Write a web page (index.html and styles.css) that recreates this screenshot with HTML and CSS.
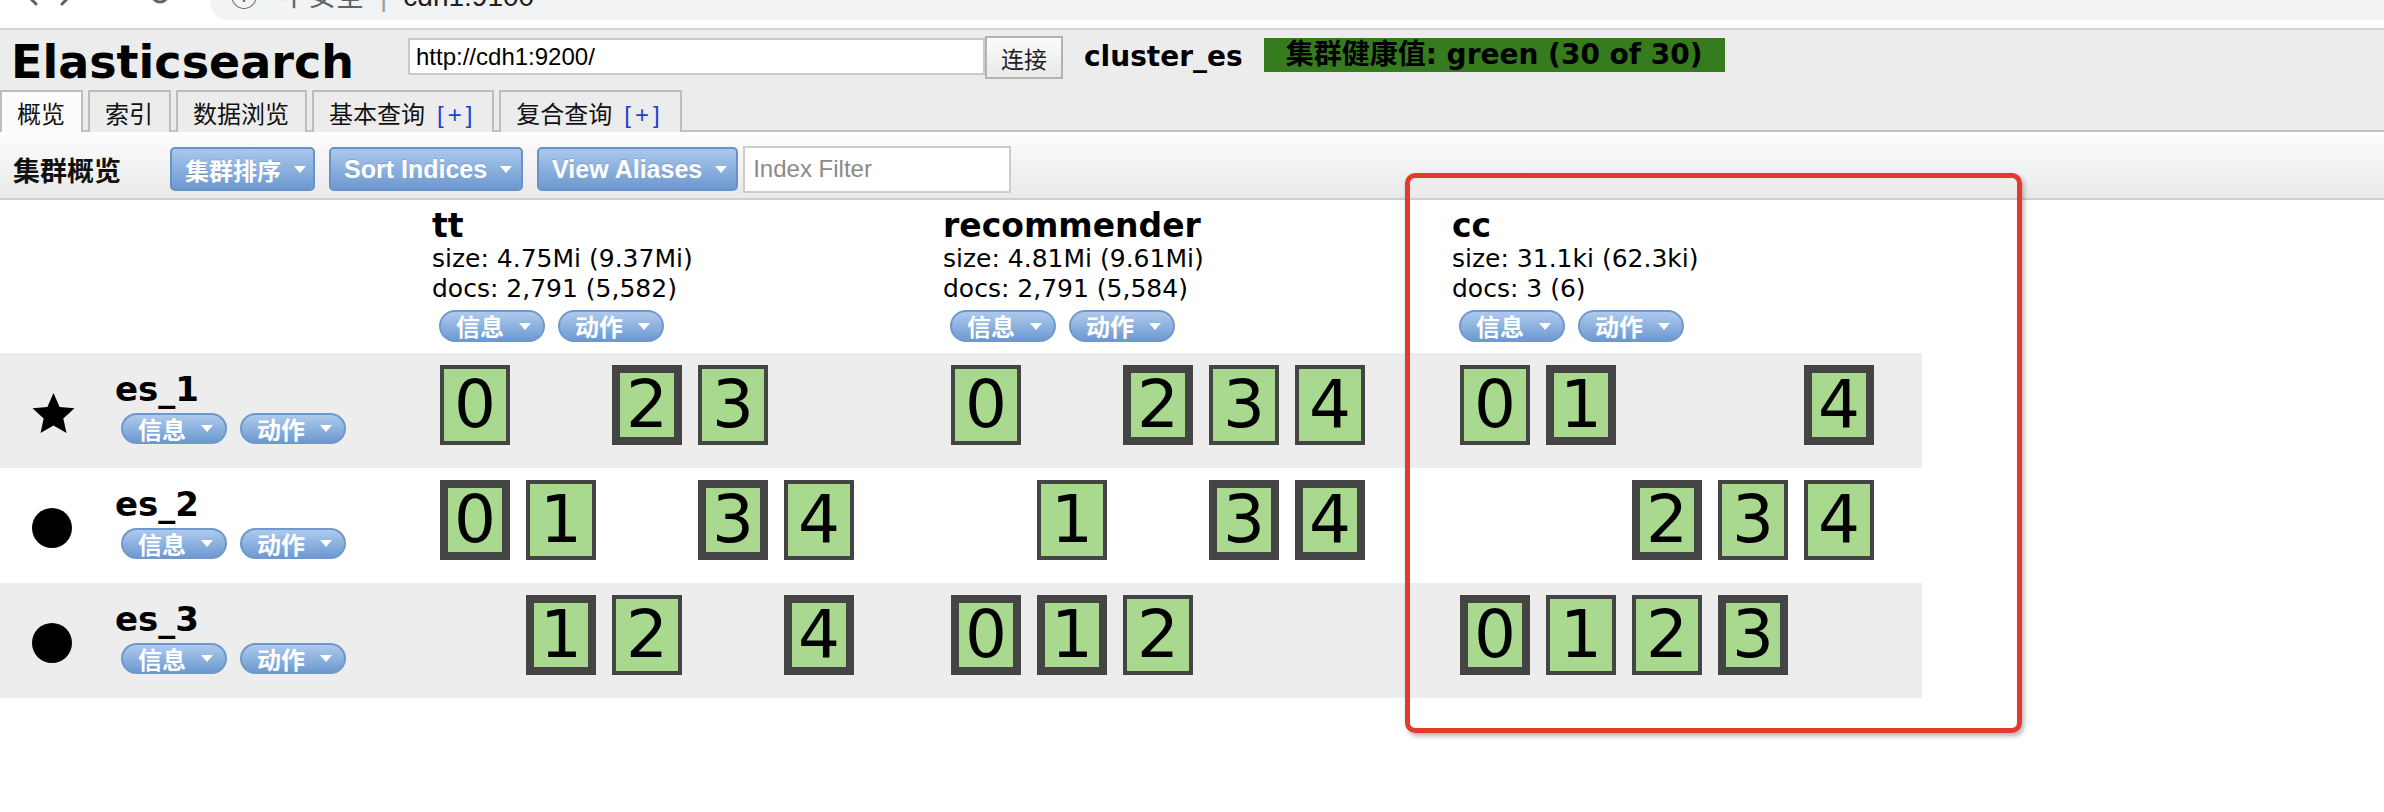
FILE: index.html
```html
<!DOCTYPE html>
<html lang="zh">
<head>
<meta charset="utf-8">
<title>Elasticsearch Head</title>
<link rel="stylesheet" href="styles.css">
</head>
<body>
<div class="chrome">
  <div class="navs">
    <svg class="nav-svg" width="210" height="28" viewBox="0 0 210 28">
      <path d="M24 -8 L36 4" />
      <path d="M74 -8 L62 4" />
      <path d="M152 -6 A8 8 0 0 0 168 -6" />
    </svg>
  </div>
  <div class="omni">
    <div class="omni-text">
      <span class="omni-ic">ⓘ</span><span class="omni-warn">不安全</span><span class="omni-sep">|</span><span class="omni-url">cdh1:9100</span>
    </div>
  </div>
</div>

<div class="header">
  <div class="hrow">
    <h1 class="title">Elasticsearch</h1>
    <input class="url" type="text" value="http://cdh1:9200/">
    <button class="connect">连接</button>
    <span class="cluster-name">cluster_es</span>
    <span class="health">集群健康值: green (30 of 30)</span>
  </div>
  <div class="tabs">
    <div class="tab active">概览</div>
    <div class="tab">索引</div>
    <div class="tab">数据浏览</div>
    <div class="tab">基本查询<span class="plus">[+]</span></div>
    <div class="tab">复合查询<span class="plus">[+]</span></div>
  </div>
</div>

<div class="toolbar">
  <span class="tb-label">集群概览</span>
  <button class="tb-btn cjk">集群排序<i class="tri"></i></button>
  <button class="tb-btn">Sort Indices<i class="tri"></i></button>
  <button class="tb-btn">View Aliases<i class="tri"></i></button>
  <input class="filter" type="text" placeholder="Index Filter">
</div>

<div class="cluster">
  <div class="row head">
    <div class="cell"></div>
    <div class="cell idx">
      <div class="name">tt</div>
      <div class="meta">size: 4.75Mi (9.37Mi)</div>
      <div class="meta">docs: 2,791 (5,582)</div>
      <div class="pills"><span class="pill">信息<i class="tri"></i></span><span class="pill">动作<i class="tri"></i></span></div>
    </div>
    <div class="cell idx">
      <div class="name">recommender</div>
      <div class="meta">size: 4.81Mi (9.61Mi)</div>
      <div class="meta">docs: 2,791 (5,584)</div>
      <div class="pills"><span class="pill">信息<i class="tri"></i></span><span class="pill">动作<i class="tri"></i></span></div>
    </div>
    <div class="cell idx">
      <div class="name">cc</div>
      <div class="meta">size: 31.1ki (62.3ki)</div>
      <div class="meta">docs: 3 (6)</div>
      <div class="pills"><span class="pill">信息<i class="tri"></i></span><span class="pill">动作<i class="tri"></i></span></div>
    </div>
  </div>

  <div class="row node-row alt">
    <div class="cell node">
      <div class="node-ic">
        <svg width="43" height="40" viewBox="0 0 43 40"><polygon points="21.5,0 27.6,13.9 42.5,15.3 31.3,25.4 34.5,40 21.5,32.4 8.5,40 11.7,25.4 0.5,15.3 15.4,13.9"/></svg>
      </div>
      <div class="node-info">
        <div class="name">es_1</div>
        <div class="pills"><span class="pill">信息<i class="tri"></i></span><span class="pill">动作<i class="tri"></i></span></div>
      </div>
    </div>
    <div class="cell shards">
      <div class="shard rep">0</div><div class="shard none"></div><div class="shard pri">2</div><div class="shard rep">3</div>
    </div>
    <div class="cell shards">
      <div class="shard rep">0</div><div class="shard none"></div><div class="shard pri">2</div><div class="shard rep">3</div><div class="shard rep">4</div>
    </div>
    <div class="cell shards">
      <div class="shard rep">0</div><div class="shard pri">1</div><div class="shard none"></div><div class="shard none"></div><div class="shard pri">4</div>
    </div>
  </div>

  <div class="row node-row">
    <div class="cell node">
      <div class="node-ic">
        <svg width="43" height="40" viewBox="0 0 43 40"><circle cx="20" cy="20" r="20"/></svg>
      </div>
      <div class="node-info">
        <div class="name">es_2</div>
        <div class="pills"><span class="pill">信息<i class="tri"></i></span><span class="pill">动作<i class="tri"></i></span></div>
      </div>
    </div>
    <div class="cell shards">
      <div class="shard pri">0</div><div class="shard rep">1</div><div class="shard none"></div><div class="shard pri">3</div><div class="shard rep">4</div>
    </div>
    <div class="cell shards">
      <div class="shard none"></div><div class="shard rep">1</div><div class="shard none"></div><div class="shard pri">3</div><div class="shard pri">4</div>
    </div>
    <div class="cell shards">
      <div class="shard none"></div><div class="shard none"></div><div class="shard pri">2</div><div class="shard rep">3</div><div class="shard rep">4</div>
    </div>
  </div>

  <div class="row node-row alt">
    <div class="cell node">
      <div class="node-ic">
        <svg width="43" height="40" viewBox="0 0 43 40"><circle cx="20" cy="20" r="20"/></svg>
      </div>
      <div class="node-info">
        <div class="name">es_3</div>
        <div class="pills"><span class="pill">信息<i class="tri"></i></span><span class="pill">动作<i class="tri"></i></span></div>
      </div>
    </div>
    <div class="cell shards">
      <div class="shard none"></div><div class="shard pri">1</div><div class="shard rep">2</div><div class="shard none"></div><div class="shard pri">4</div>
    </div>
    <div class="cell shards">
      <div class="shard pri">0</div><div class="shard pri">1</div><div class="shard rep">2</div>
    </div>
    <div class="cell shards">
      <div class="shard pri">0</div><div class="shard rep">1</div><div class="shard rep">2</div><div class="shard pri">3</div>
    </div>
  </div>
</div>

<div class="annotation"></div>
</body>
</html>
```

FILE: styles.css
```css
* { box-sizing: border-box; }
html, body { margin: 0; padding: 0; }
body {
  width: 2384px;
  height: 812px;
  overflow: hidden;
  position: relative;
  background: #ffffff;
  color: #000;
  font-family: "DejaVu Sans", "Noto Sans CJK SC", sans-serif;
}

/* browser chrome strip */
.chrome {
  height: 30px;
  display: flex;
  background: #ffffff;
  border-bottom: 2px solid #d6d6d6;
  overflow: hidden;
}
.navs { width: 210px; flex: 0 0 210px; }
.nav-svg { display: block; overflow: visible; }
.nav-svg path { fill: none; stroke: #5f6368; stroke-width: 3; stroke-linecap: round; }
.omni {
  flex: 1;
  height: 20px;
  background: #f1f3f4;
  border-bottom-left-radius: 18px;
  overflow: hidden;
}
.omni-text {
  margin-top: -17px;
  line-height: 28px;
  font-family: "Liberation Sans", "Noto Sans CJK SC", sans-serif;
  font-size: 28px;
  white-space: nowrap;
  color: #202124;
}
.omni-ic { margin-left: 20px; color: #5f6368; }
.omni-warn { margin-left: 22px; color: #5f6368; }
.omni-sep { margin: 0 16px; color: #9aa0a6; }

/* app header */
.header { background: #ececec; }
.hrow { height: 60px; display: flex; align-items: flex-start; }
.title {
  flex: 0 0 408px;
  margin: 0;
  padding-left: 11px;
  font: bold 46px/60px "DejaVu Sans", sans-serif;
  margin-top: 2px;
}
.url {
  width: 577px;
  height: 37px;
  margin-top: 8px;
  border: 2px solid #c9c9c9;
  background: #fff;
  padding: 0 6px;
  font: 24px "Liberation Sans", sans-serif;
  color: #000;
}
.connect {
  width: 78px;
  height: 43px;
  margin-top: 6px;
  border: 2px solid #b3b3b3;
  background: linear-gradient(#fbfbfb, #e9e9e9);
  font: 23px "Noto Sans CJK SC", sans-serif;
  color: #222;
  padding: 0;
}
.cluster-name {
  margin: 10px 0 0 21px;
  font: bold 28px/34px "DejaVu Sans", sans-serif;
}
.health {
  margin: 8px 0 0 21px;
  height: 34px;
  padding: 0 22px;
  background: #377b1f;
  font: bold 28px/34px "DejaVu Sans", "Noto Sans CJK SC", sans-serif;
  color: #000;
  white-space: nowrap;
}

.tabs {
  display: flex;
  height: 42px;
  border-bottom: 2px solid #c2c2c2;
}
.tab {
  height: 42px;
  margin-right: 5px;
  padding: 7px 16px 0 15px;
  border: 2px solid #bdbdbd;
  border-bottom: none;
  background: #ececec;
  font: 24px/32px "Liberation Sans", "Noto Sans CJK SC", sans-serif;
  color: #111;
  overflow: hidden;
  white-space: nowrap;
}
.tab.active {
  background: #fbfbfb;
  height: 42px;
  margin-bottom: -2px;
  position: relative;
}
.plus {
  margin-left: 12px;
  letter-spacing: 4px;
  color: #1f3fd0;
}

/* toolbar */
.toolbar {
  height: 68px;
  display: flex;
  align-items: center;
  padding: 8px 0 0 13px;
  background: linear-gradient(#fdfdfd, #e9e9e9);
  border-bottom: 2px solid #cfcfcf;
}
.tb-label {
  width: 157px;
  font: bold 27px "Noto Sans CJK SC", sans-serif;
  color: #111;
}
.tb-btn {
  display: inline-flex;
  align-items: center;
  height: 44px;
  margin-right: 14px;
  padding: 0 9px 0 13px;
  border: 2px solid #6a92c6;
  border-radius: 5px;
  background: linear-gradient(#a9c8ec, #6d99cf);
  color: #fff;
  font: bold 25px "Liberation Sans", "Noto Sans CJK SC", sans-serif;
  text-shadow: 0 -1px 0 rgba(0, 0, 0, 0.15);
}
.tb-btn.cjk { font-size: 24px; padding-right: 7px; }
.tb-btn .tri { margin-left: 13px; }
.tri {
  display: inline-block;
  width: 0;
  height: 0;
  border-left: 6px solid transparent;
  border-right: 6px solid transparent;
  border-top: 7px solid #fff;
}
.filter {
  width: 268px;
  height: 47px;
  margin-left: -9px;
  border: 2px solid #cccccc;
  background: #fff;
  padding: 0 8px;
  font: 24px "Liberation Sans", sans-serif;
}
.filter::placeholder { color: #8a8a8a; }

/* cluster overview */
.cluster { width: 1922px; }
.row {
  display: grid;
  grid-template-columns: 432px 511px 509px 470px;
}
.row.alt { background: #ededed; }
.row.head { height: 153px; }
.node-row { height: 115px; }

.name {
  font: bold 33px/36px "DejaVu Sans", sans-serif;
  white-space: nowrap;
}
.node-info .name { font-size: 34px; }
.idx { padding-top: 8px; }
.meta { font-size: 25px; line-height: 30px; white-space: nowrap; }
.pills { display: flex; gap: 13px; padding-left: 7px; }
.idx .pills { margin-top: 6px; }
.pill {
  display: inline-flex;
  align-items: center;
  height: 32px;
  padding: 0 12px 0 15px;
  border: 2px solid #7098cb;
  border-radius: 16px;
  background: linear-gradient(#adcaed, #6e9ad0);
  color: #fff;
  font: bold 24px/1 "Noto Sans CJK SC", sans-serif;
}
.pill .tri { margin-left: 15px; }

.node { display: flex; }
.node-ic { padding-left: 32px; margin-top: 40px; width: 75px; }
.node-ic svg { display: block; fill: #000; }
.node-info { margin-left: 40px; padding-top: 18px; }
.node-info .pills { margin-top: 6px; padding-left: 6px; }
.node-info .pill { height: 31px; }

.shards {
  display: flex;
  align-items: flex-start;
  gap: 16px;
  padding: 12px 0 0 8px;
}
.shard {
  width: 70px;
  height: 80px;
  flex: 0 0 70px;
  background: #a9d98f;
  border: 4px solid #444444;
  text-align: center;
  font: 66px/72px "DejaVu Sans", sans-serif;
  color: #000;
}
.shard.pri { border-width: 8px; line-height: 64px; }
.shard.none { visibility: hidden; }

/* red annotation frame drawn over the screenshot */
.annotation {
  position: absolute;
  left: 1405px;
  top: 173px;
  width: 617px;
  height: 560px;
  border: 5px solid #e53a2b;
  border-radius: 10px;
  box-shadow: 2px 3px 5px rgba(0, 0, 0, 0.3);
}
```
